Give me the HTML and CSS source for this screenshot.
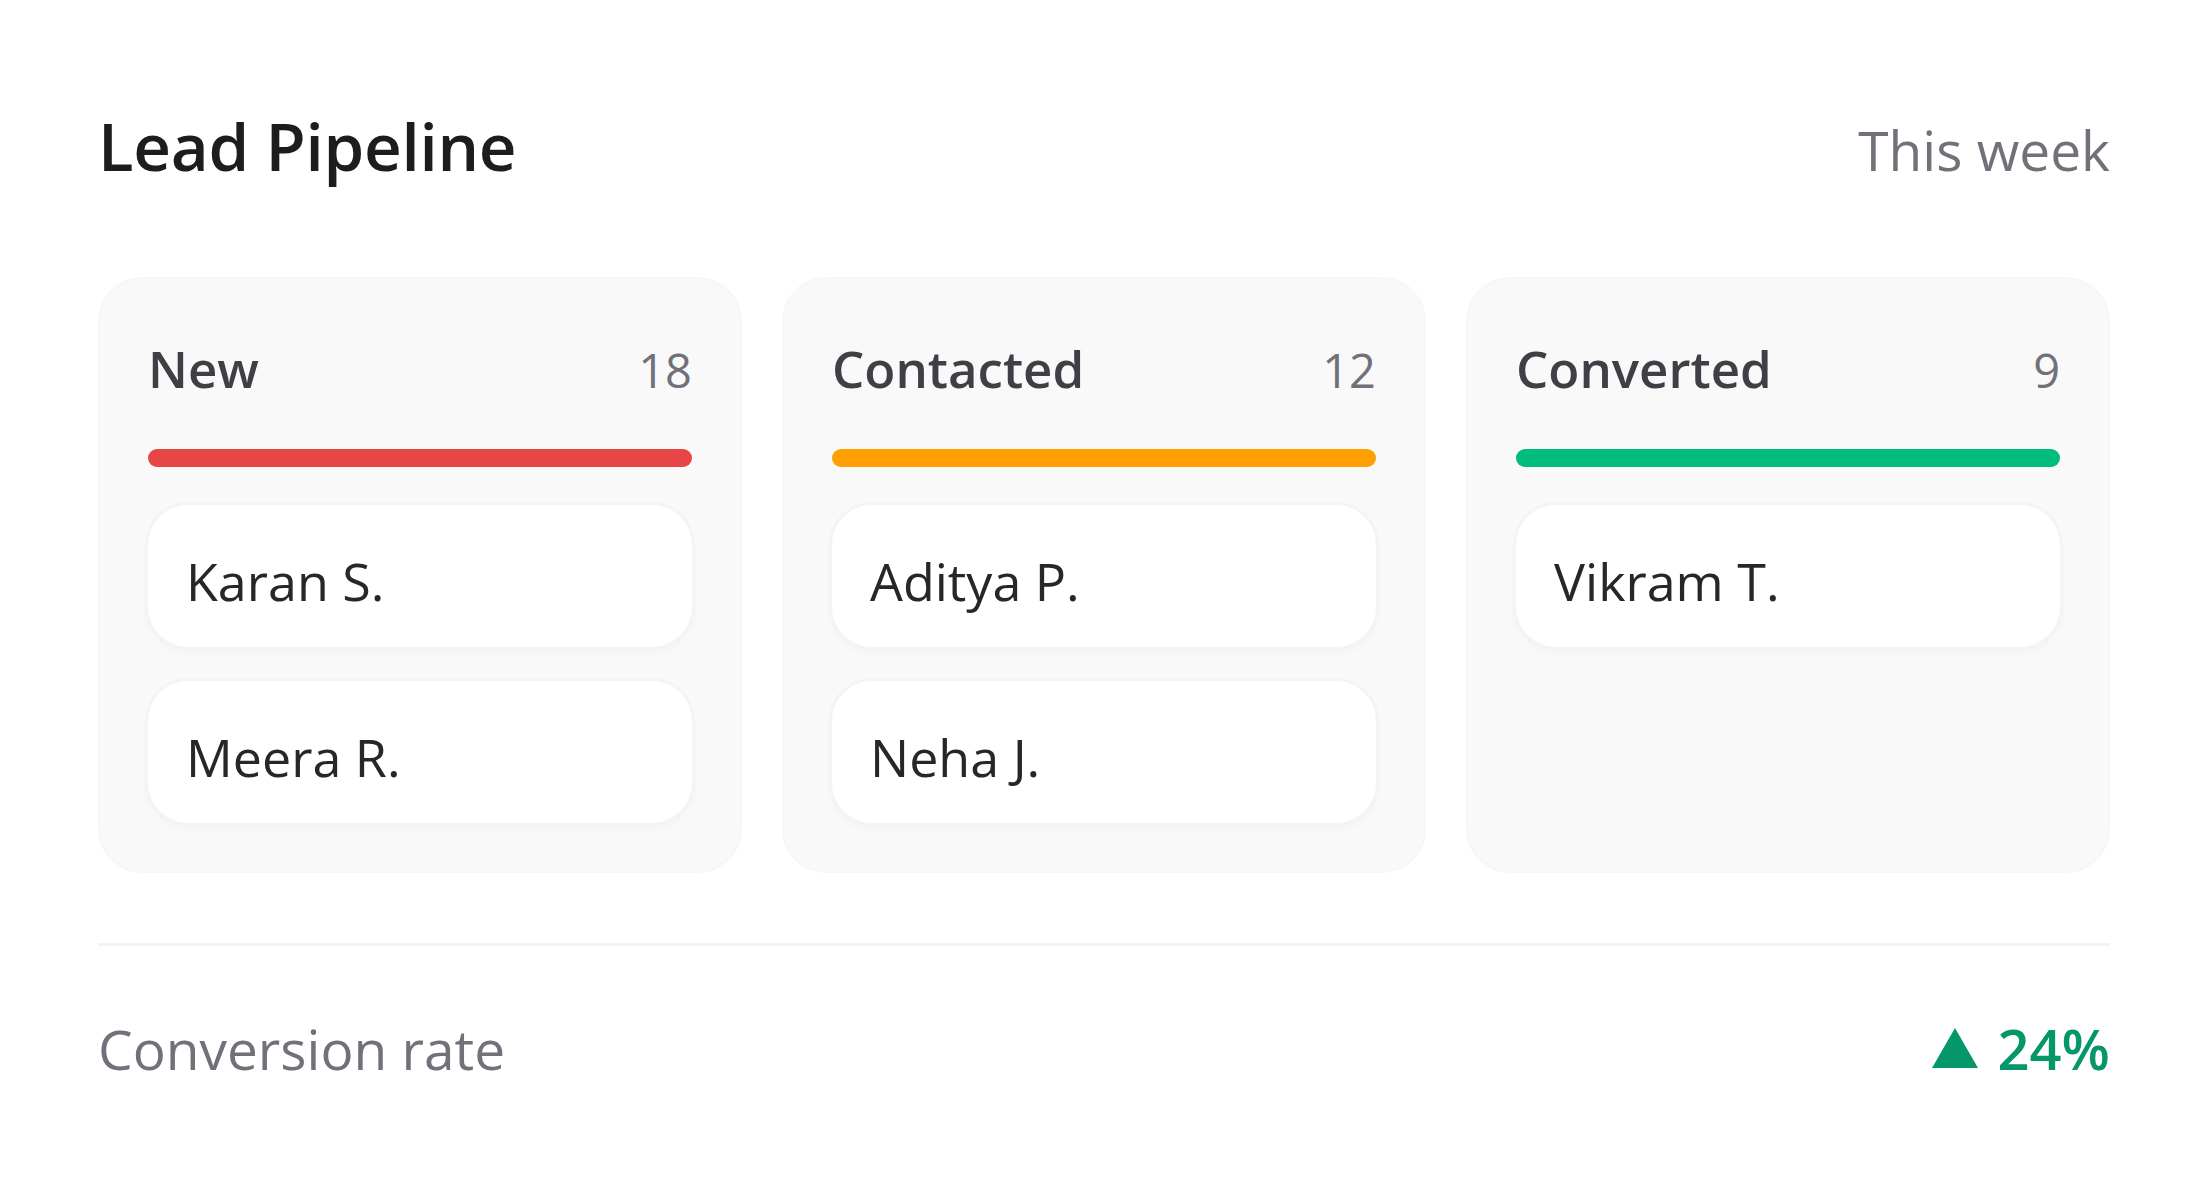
FILE: index.html
```html
<!DOCTYPE html>
<html lang="en">
<head>
<meta charset="utf-8">
<title>Lead Pipeline</title>
<link rel="stylesheet" href="styles.css">
</head>
<body>
<main class="widget">
  <header class="head">
    <h1 class="title">Lead Pipeline</h1>
    <span class="period">This week</span>
  </header>

  <section class="board">
    <div class="col">
      <div class="col-head"><span class="col-name">New</span><span class="col-count">18</span></div>
      <div class="bar bar-red"></div>
      <div class="cards">
        <div class="card">Karan S.</div>
        <div class="card">Meera R.</div>
      </div>
    </div>
    <div class="col">
      <div class="col-head"><span class="col-name">Contacted</span><span class="col-count">12</span></div>
      <div class="bar bar-orange"></div>
      <div class="cards">
        <div class="card">Aditya P.</div>
        <div class="card">Neha J.</div>
      </div>
    </div>
    <div class="col">
      <div class="col-head"><span class="col-name">Converted</span><span class="col-count">9</span></div>
      <div class="bar bar-green"></div>
      <div class="cards">
        <div class="card">Vikram T.</div>
      </div>
    </div>
  </section>

  <footer class="foot">
    <span class="foot-label">Conversion rate</span>
    <span class="foot-value"><svg class="tri" width="46" height="40" viewBox="0 0 46 40" aria-hidden="true"><path d="M23 0 L46 40 L0 40 Z" fill="#059669"/></svg><span>24%</span></span>
  </footer>
</main>
</body>
</html>
```

FILE: styles.css
```css
* { box-sizing: border-box; }

html, body {
  margin: 0;
  padding: 0;
  background: #ffffff;
}

body {
  font-family: "Open Sans", "Noto Sans", "Liberation Sans", sans-serif;
  color: #27272a;
}

.widget {
  padding: 98px 98px 60px;
}

.head {
  display: flex;
  justify-content: space-between;
  align-items: baseline;
  margin-bottom: 79px;
}

.title {
  margin: 0;
  font-size: 65.5px;
  line-height: 96px;
  font-weight: 600;
  color: #1d1d1f;
  letter-spacing: -0.3px;
}

.period {
  font-size: 55px;
  line-height: 96px;
  color: #71717a;
}

.board {
  display: grid;
  grid-template-columns: repeat(3, 1fr);
  gap: 40px;
}

.col {
  background: #f9f9f9;
  border: 2px solid #f7f7f7;
  border-radius: 44px;
  padding: 48px;
}

.col-head {
  display: flex;
  justify-content: space-between;
  align-items: baseline;
  height: 88px;
  line-height: 82px;
}

.col-name {
  font-size: 51px;
  font-weight: 600;
  color: #3f3f46;
}

.col-count {
  font-size: 47px;
  color: #71717a;
}

.bar {
  height: 18px;
  border-radius: 9px;
  margin: 34px 0 38px;
}

.bar-red { background: #e84547; }
.bar-orange { background: #ff9f00; }
.bar-green { background: #00bd7e; }

.cards {
  display: flex;
  flex-direction: column;
  gap: 34px;
}

.card {
  background: #ffffff;
  border-radius: 40px;
  padding: 38px 38px 28px;
  font-size: 52px;
  line-height: 76px;
  color: #27272a;
  box-shadow: 0 0 0 3px #f4f4f4, 0 4px 10px rgba(0, 0, 0, 0.04);
}

.foot {
  margin-top: 70px;
  border-top: 3px solid #f3f3f3;
  padding-top: 64px;
  display: flex;
  justify-content: space-between;
  align-items: baseline;
  line-height: 76px;
}

.foot-label {
  font-size: 55px;
  color: #71717a;
}

.foot-value {
  display: flex;
  align-items: baseline;
  gap: 20px;
  font-size: 56px;
  font-weight: 600;
  color: #059669;
}

.tri {
  display: block;
  align-self: center;
}
```
